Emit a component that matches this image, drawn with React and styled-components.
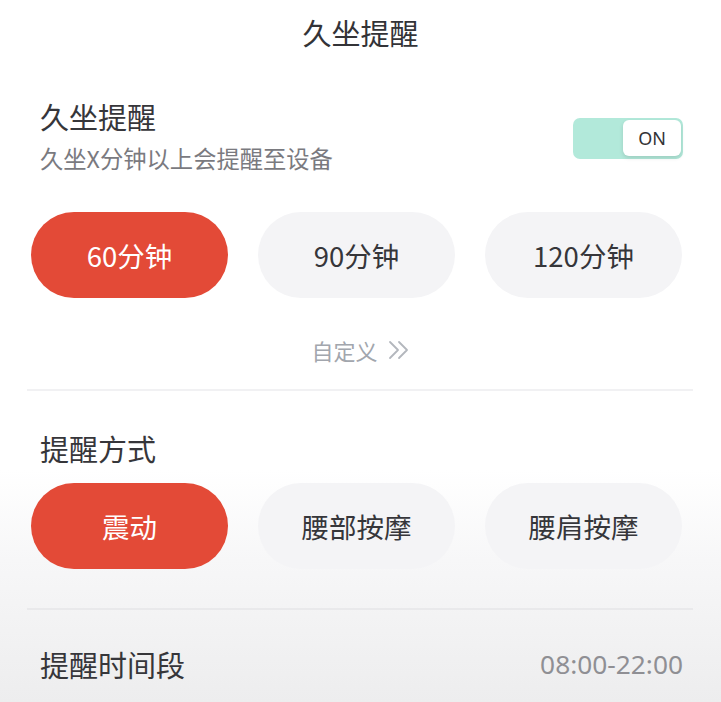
import React from "react";
import styled, { createGlobalStyle } from "styled-components";

const Global = createGlobalStyle`
  html, body { margin: 0; padding: 0; }
  body { font-family: "Noto Sans CJK SC", "Noto Sans", sans-serif; background: #fff; }
`;

const Page = styled.div`
  width: 721px;
  height: 702px;
  overflow: hidden;
  background: linear-gradient(to bottom, #ffffff 0px, #ffffff 470px, #f7f7f8 560px, #ededee 702px);
  color: #36363a;
`;

const Header = styled.div`
  height: 70px;
  line-height: 64px;
  box-sizing: border-box;
  padding-bottom: 6px;
  text-align: center;
  font-size: 29px;
  color: #333337;
`;

const SwitchRow = styled.div`
  display: flex;
  align-items: center;
  justify-content: space-between;
  padding: 26px 38px 0 40px;
`;

const TitleBlock = styled.div`
  display: flex;
  flex-direction: column;
`;

const Heading = styled.div`
  font-size: 29px;
  line-height: 40px;
  color: #36363a;
`;

const Sub = styled.div`
  font-size: 23.3px;
  line-height: 32px;
  margin-top: 6px;
  color: #7a7a7f;
`;

const Toggle = styled.div`
  width: 110px;
  height: 41px;
  border-radius: 7px;
  background: #b2e9da;
  box-sizing: border-box;
  padding: 2px;
  display: flex;
  justify-content: flex-end;
  align-items: flex-start;
  margin-top: 6px;
`;

const Knob = styled.div`
  width: 58px;
  height: 36px;
  border-radius: 6px;
  background: #fff;
  box-shadow: 0 2px 4px rgba(0, 0, 0, 0.12);
  display: flex;
  align-items: center;
  justify-content: center;
  font-family: "Noto Sans", sans-serif;
  font-size: 18px;
  color: #333336;
`;

const ButtonRow = styled.div`
  display: grid;
  grid-template-columns: repeat(3, 197px);
  column-gap: 30px;
  padding: 0 0 0 31px;
  margin-top: ${(p) => p.$top}px;
`;

const Pill = styled.div`
  height: 86px;
  border-radius: 43px;
  display: flex;
  align-items: center;
  justify-content: center;
  font-size: 27.5px;
  background: ${(p) => (p.$active ? "#e34a37" : "#f4f4f6")};
  color: ${(p) => (p.$active ? "#ffffff" : "#36363a")};
`;

const Custom = styled.div`
  display: flex;
  align-items: center;
  justify-content: center;
  gap: 10px;
  margin-top: 36px;
  height: 32px;
  font-size: 22px;
  color: #a2a6ad;
`;

const Divider = styled.div`
  height: 2px;
  margin: ${(p) => p.$top}px 28px 0 27px;
  background: ${(p) => p.$color};
`;

const SectionTitle = styled.div`
  padding-left: 40px;
  margin-top: ${(p) => p.$top}px;
  font-size: 29px;
  line-height: 40px;
  color: #36363a;
`;

const TimeRow = styled.div`
  display: flex;
  align-items: center;
  justify-content: space-between;
  padding: 0 38px 0 40px;
  margin-top: 34px;
  height: 40px;
`;

const TimeLabel = styled.div`
  font-size: 29px;
  color: #36363a;
`;

const TimeValue = styled.div`
  font-family: "Noto Sans", sans-serif;
  font-size: 26.3px;
  color: #8f8f94;
`;

const Chevrons = () => (
  <svg width="22" height="20" viewBox="0 0 22 20" fill="none" stroke="#b3b7bd" strokeWidth="1.8" strokeLinecap="round" strokeLinejoin="round">
    <path d="M2 2 L10 10 L2 18" />
    <path d="M11 2 L19 10 L11 18" />
  </svg>
);

export default function App() {
  const durations = ["60分钟", "90分钟", "120分钟"];
  const modes = ["震动", "腰部按摩", "腰肩按摩"];
  return (
    <Page>
      <Global />
      <Header>久坐提醒</Header>
      <SwitchRow>
        <TitleBlock>
          <Heading>久坐提醒</Heading>
          <Sub>久坐X分钟以上会提醒至设备</Sub>
        </TitleBlock>
        <Toggle>
          <Knob>ON</Knob>
        </Toggle>
      </SwitchRow>
      <ButtonRow $top={38}>
        {durations.map((d, i) => (
          <Pill key={d} $active={i === 0}>{d}</Pill>
        ))}
      </ButtonRow>
      <Custom>
        <span>自定义</span>
        <Chevrons />
      </Custom>
      <Divider $top={23} $color="#f1f1f3" />
      <SectionTitle $top={37}>提醒方式</SectionTitle>
      <ButtonRow $top={15}>
        {modes.map((m, i) => (
          <Pill key={m} $active={i === 0}>{m}</Pill>
        ))}
      </ButtonRow>
      <Divider $top={39} $color="#e9e9eb" />
      <TimeRow>
        <TimeLabel>提醒时间段</TimeLabel>
        <TimeValue>08:00-22:00</TimeValue>
      </TimeRow>
    </Page>
  );
}
